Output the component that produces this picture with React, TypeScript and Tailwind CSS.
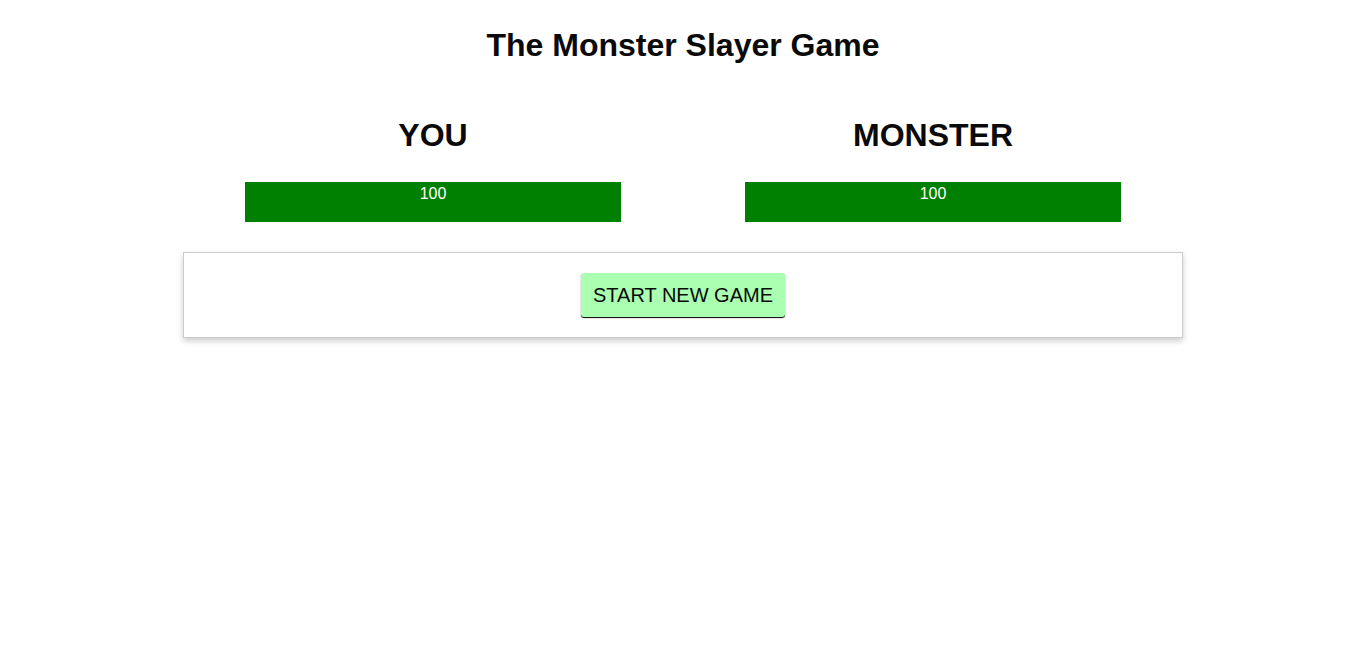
import { useState } from 'react';

function HealthBar({ value }: { value: number }) {
  return (
    <div className="mx-auto h-[40px] w-[80%] bg-[#eeeeee]">
      <div
        className="h-full bg-[#008000] text-center text-[16px] leading-[24px] text-white"
        style={{ width: `${value}%` }}
      >
        {value}
      </div>
    </div>
  );
}

export default function App() {
  const [playerHealth] = useState(100);
  const [monsterHealth] = useState(100);

  return (
    <div className="min-h-screen bg-white text-[#0a0a0a]" style={{ fontFamily: '"Liberation Sans", Arial, sans-serif' }}>
      <h1 className="pt-[27px] text-center text-[32px] font-bold leading-[37px]">The Monster Slayer Game</h1>

      <div className="mx-auto mt-[53px] w-[1000px]">
        <div className="grid grid-cols-2">
          <div className="px-[15px]">
            <h2 className="text-center text-[32px] font-bold leading-[37px]">YOU</h2>
            <div className="mt-[28px]">
              <HealthBar value={playerHealth} />
            </div>
          </div>
          <div className="px-[15px]">
            <h2 className="text-center text-[32px] font-bold leading-[37px]">MONSTER</h2>
            <div className="mt-[28px]">
              <HealthBar value={monsterHealth} />
            </div>
          </div>
        </div>

        <div className="mt-[30px] border border-[#cccccc] p-[10px] text-center shadow-[0_3px_6px_#cccccc]">
          <button className="m-[10px] rounded-[3px] bg-[#aaffb0] p-[12px] text-[20px] leading-[20px] shadow-[0_1px_1px_black] hover:bg-[#76ff7e]">
            START NEW GAME
          </button>
        </div>
      </div>
    </div>
  );
}
